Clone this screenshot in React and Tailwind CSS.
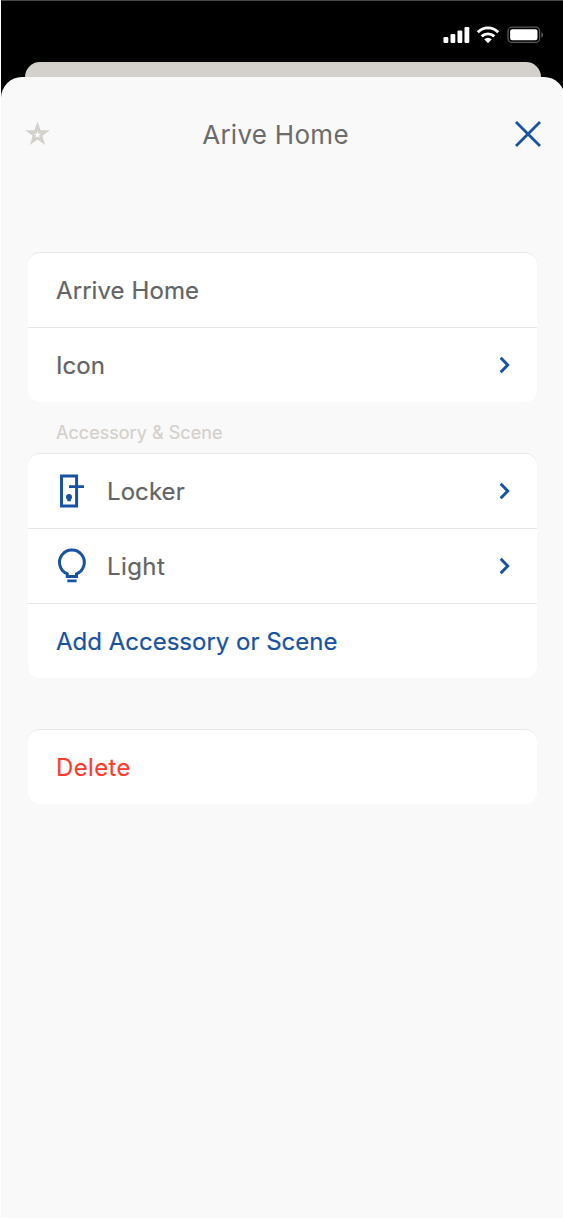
import React from 'react';

function StatusIcons() {
  return (
    <svg width="102" height="20" viewBox="0 0 102 20" className="block shrink-0" aria-hidden="true">
      <g fill="#fff">
        <rect x="0.5" y="12" width="4.8" height="6" rx="1.2" />
        <rect x="7.5" y="9" width="4.8" height="9" rx="1.2" />
        <rect x="14.5" y="5.4" width="4.8" height="12.6" rx="1.2" />
        <rect x="21.5" y="2" width="4.8" height="16" rx="1.2" />
      </g>
      <g fill="none" stroke="#fff" strokeWidth="2.9">
        <path d="M34.8 7.2a14.2 14.2 0 0 1 20.4 0" />
        <path d="M38.7 11.4a9 9 0 0 1 12.6 0" />
      </g>
      <path d="M41.2 14.3a5.8 5.8 0 0 1 7.6 0l-3.8 3.9z" fill="#fff" />
      <rect x="65" y="2.2" width="31.6" height="15.2" rx="4" fill="none" stroke="#5a5a5a" strokeWidth="1.3" />
      <rect x="67.1" y="4.3" width="27.4" height="11" rx="2.2" fill="#fff" />
      <path d="M98.4 7.2v5.4c2.3-.8 2.3-4.6 0-5.4z" fill="#5a5a5a" />
    </svg>
  );
}

function Chevron() {
  return (
    <svg width="14" height="18" viewBox="0 0 14 18" className="ml-auto mr-[25px] block" aria-hidden="true">
      <path d="M2.7 1.8 9.7 9l-7 7.2" fill="none" stroke="#1753a2" strokeWidth="3" />
    </svg>
  );
}

function LockerIcon() {
  return (
    <svg width="32" height="36" viewBox="0 0 32 36" className="block" aria-hidden="true">
      <path d="M5.5 2.9h15.1v30.2H5.5z" fill="none" stroke="#1753a2" strokeWidth="3" />
      <path d="M13 13.7h15" stroke="#1753a2" strokeWidth="2.8" />
      <circle cx="13" cy="24" r="3" fill="#1753a2" />
      <path d="M11.3 24h3.6v4.2h-3.6z" fill="#1753a2" />
    </svg>
  );
}

function LightIcon() {
  return (
    <svg width="32" height="36" viewBox="0 0 32 36" className="block" aria-hidden="true">
      <path d="M11.3 28.4v-2.5A12.4 12.4 0 1 1 20.5 25.9v2.5z" fill="none" stroke="#1753a2" strokeWidth="3" />
      <path d="M11.3 32.9h9.3" stroke="#1753a2" strokeWidth="2.9" />
    </svg>
  );
}

function Card({ children }) {
  return (
    <section className="w-[509px] overflow-hidden rounded-xl border-t border-[#e7e7e7] bg-white">
      {children}
    </section>
  );
}

function Row({ icon, label, chevron, divider, tone = 'text-[#636466]', tracking = 'tracking-[0.08px]' }) {
  return (
    <div className={`flex items-center pl-7 ${divider ? 'h-[75px] border-t border-[#e7e7e7]' : 'h-[74px]'}`}>
      {icon && <span className="w-[51px]">{icon}</span>}
      <span className={`pt-0.5 text-2xl font-normal [-webkit-text-stroke:0.2px_currentColor] ${tone} ${tracking}`}>{label}</span>
      {chevron && <Chevron />}
    </div>
  );
}

export default function App() {
  return (
    <div className="h-[1219px] w-[563px] overflow-hidden bg-white pl-px font-['Inter',sans-serif]">
      <div className="flex h-[1218px] w-[564px] flex-col border-t border-[#484848] bg-black">
        <header className="flex h-[60.5px] shrink-0 items-start justify-end pr-[20px] pt-6">
          <StatusIcons />
        </header>
        <div className="mx-6 h-[15.5px] shrink-0 rounded-t-[15px] bg-[#d4d0cb]" />
        <main className="flex-1 rounded-t-[21px] bg-[#f9f9f9] pl-[27px]">
          <div className="-ml-1 flex h-[114px] w-[519px] items-center justify-between">
            <svg width="28" height="28" viewBox="0 0 28 28" className="block" aria-hidden="true">
              <path fill="#d4d0cb" d="m13.5 1.5 3 8.8h9.4l-7.6 5.5 2.9 9.1-7.7-5.5-7.6 5.5 2.8-9.1L1.1 10.3h9.4z" />
              <path fill="#f9f9f9" d="m13.5 11 1 2.7h2.7L15 15.5l.8 2.6-2.3-1.5-2.3 1.5.8-2.6-2.2-1.8h2.7z" />
            </svg>
            <h1 className="mr-3.5 text-[26px] font-normal tracking-[0.28px] text-[#6b6b6b]">Arive Home</h1>
            <svg width="30" height="30" viewBox="0 0 30 30" className="block" aria-hidden="true">
              <path d="m3 3 24 24M27 3 3 27" stroke="#1753a2" strokeWidth="2.8" />
            </svg>
          </div>
          <div className="pt-[61px]">
            <Card>
              <Row label="Arrive Home" />
              <Row label="Icon" chevron divider />
            </Card>
            <h2 className="flex h-[51px] items-center pl-7 pt-2.5 text-lg font-normal tracking-[0.05px] text-[#d4d0cb] [-webkit-text-stroke:0.2px_currentColor]">Accessory &amp; Scene</h2>
            <Card>
              <Row icon={<LockerIcon />} label="Locker" chevron />
              <Row icon={<LightIcon />} label="Light" chevron divider tracking="tracking-[0.4px]" />
              <Row label="Add Accessory or Scene" tone="text-[#1753a2]" tracking="tracking-normal" divider />
            </Card>
            <div className="h-[51px]" />
            <Card>
              <Row label="Delete" tone="text-[#ff3b30]" tracking="tracking-[0.35px]" />
            </Card>
          </div>
        </main>
      </div>
    </div>
  );
}
